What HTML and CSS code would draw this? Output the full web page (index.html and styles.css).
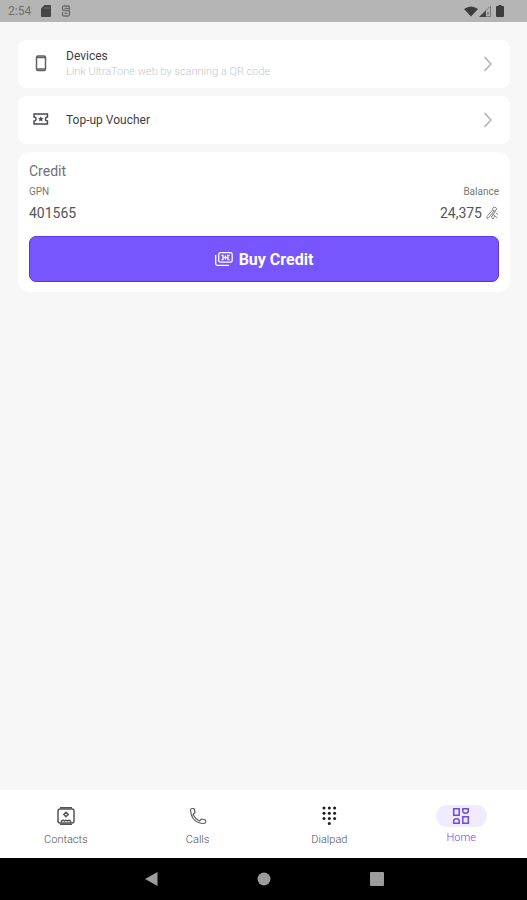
FILE: index.html
```html
<!DOCTYPE html>
<html lang="en">
<head>
<meta charset="utf-8">
<meta name="viewport" content="width=device-width, initial-scale=1">
<title>UltraTone</title>
<link rel="stylesheet" href="styles.css">
</head>
<body>
<header class="status">
  <div class="status-group">
    <span class="clock">2:54</span>
    <svg width="10" height="12" viewBox="0 0 10 12"><path d="M3.500 0H9a1 1 0 0 1 1 1v10a1 1 0 0 1-1 1H1a1 1 0 0 1-1-1V3.500z" fill="#454545"/><path d="M4 2v2M6 2v2M8 2v2" stroke="#777"/></svg>
    <svg width="10" height="12" viewBox="0 0 10 12" fill="none" stroke="#6c6c6c" stroke-width="1.300"><path d="M1.500 2.500Q1.500 1 3 1h4q1.500 0 1.500 1.500M1.500 2.500V4Q1.500 5.500 3 5.500h4q1.500 0 1.500 1.500v2.500Q8.500 11 7 11H3Q1.500 11 1.500 9.500V7M3.500 3.300h5V5M3.500 8.300h3"/></svg>
  </div>
  <div class="status-group status-right">
    <svg width="14" height="12" viewBox="0 0 14 12"><path d="M0 4Q7-1 14 4L7 11.500z" fill="#3c3c3c"/></svg>
    <svg width="12" height="12" viewBox="0 0 12 12"><path d="M11.500 1v10.500H1z" fill="none" stroke="#777"/><path d="M7 5.500V12H0z" fill="#444"/><path d="M9 7v3" stroke="#555"/></svg>
    <svg class="battery" width="8" height="12" viewBox="0 0 8 12"><path d="M2.500 0h3v1H7a1 1 0 0 1 1 1v9a1 1 0 0 1-1 1H1a1 1 0 0 1-1-1V2a1 1 0 0 1 1-1h1.500z" fill="#3c3c3c"/></svg>
  </div>
</header>

<main class="content">
  <a class="card row" href="#devices">
    <svg class="row-icon" width="18" height="18" viewBox="0 0 18 18" fill="none" stroke="#606068"><rect x="4.500" y="1" width="9" height="14.500" rx="1.500" stroke-width="1.500"/><path d="M4.500 2.500h9M4.500 14h9" stroke-width="1.500"/></svg>
    <span class="row-text"><span class="row-title">Devices</span><span class="row-note">Link UltraTone web by scanning a QR code</span></span>
    <svg width="8" height="16" viewBox="0 0 8 16" fill="none" stroke="#a8a8a8" stroke-width="1.300"><path d="M.5 1L7 8 .5 15"/></svg>
  </a>
  <a class="card row" href="#voucher">
    <svg class="row-icon" width="18" height="18" viewBox="0 0 18 18" fill="none" stroke="#48484c" stroke-width="1.400"><path d="M2 3h13.500v3a2 2 0 0 0 0 4v3H2v-3a2 2 0 0 0 0-4z"/><path d="M8.800 5.300l.8 1.700 1.900.2-1.400 1.300.4 1.900-1.700-.9-1.700.9.4-1.900-1.400-1.300L8 7z" fill="#48484c" stroke="none"/></svg>
    <span class="row-title">Top-up Voucher</span>
    <svg width="8" height="16" viewBox="0 0 8 16" fill="none" stroke="#a8a8a8" stroke-width="1.300"><path d="M.5 1L7 8 .5 15"/></svg>
  </a>
  <section class="card credit">
    <h2 class="credit-title">Credit</h2>
    <dl class="facts">
      <div><dt>GPN</dt><dd>401565</dd></div>
      <div class="balance"><dt>Balance</dt><dd>24,375
        <svg width="13" height="14" viewBox="0 0 13 14" fill="none" stroke="#858585"><ellipse cx="8.500" cy="3" rx="2" ry="1.800"/><path d="M6.500 4L1 10.500M8 5L2.500 12M1 10.500v2l1.500-.5M9.500 5L6 10.500M6 7.500l5.500 4.500M10 7l2 1.500M5 10l2 3 2-3"/></svg></dd></div>
    </dl>
    <button class="buy" type="button">
      <svg width="18" height="14" viewBox="0 0 18 14" fill="none" stroke="#fff" stroke-width="1.300"><rect x="3.700" y=".7" width="13.500" height="9.500" rx="2"/><path d="M.7 3v8.800a1.500 1.500 0 0 0 1.500 1.500H14M6.500 3.300h1.500v4.400H6.500M14.500 3.300H13v4.400h1.500M10.500 3.500v4M8.800 5.500h3.400"/></svg>
      Buy Credit
    </button>
  </section>
</main>

<nav class="tabs">
  <a class="tab" href="#contacts">
    <span class="tab-icon"><svg width="18" height="18" viewBox="0 0 18 18" fill="none" stroke="#555" stroke-width="1.500"><rect x="1" y="2" width="16" height="14" rx="2"/><path d="M3 .8h12M3 17.200h12"/><path d="M9 5.300L11.200 7.500 9 9.700 6.800 7.500zM4.500 15.500v-1.500q1.500-1.500 3 0 1.500-1.500 3 0 1.500-1.500 3 0v1.500"/></svg></span>
    Contacts
  </a>
  <a class="tab" href="#calls">
    <span class="tab-icon"><svg width="18" height="18" viewBox="0 0 18 18" fill="none" stroke="#606060" stroke-width="1.200" stroke-linejoin="round"><path d="M1.500 3Q1.500 1.500 3 1.500h2L6 5.500 4 7.500Q6.300 12 10.500 14l2-2 4 1v2q0 1.500-1.500 1.500Q2.500 16 1.500 3z"/></svg></span>
    Calls
  </a>
  <a class="tab" href="#dialpad">
    <span class="tab-icon"><svg width="16" height="20" viewBox="0 0 16 20" fill="#1c1c1c"><circle cx="3" cy="2" r="1.500"/><circle cx="8.300" cy="2" r="1.500"/><circle cx="13.600" cy="2" r="1.500"/><circle cx="3" cy="7.200" r="1.500"/><circle cx="8.300" cy="7.200" r="1.500"/><circle cx="13.600" cy="7.200" r="1.500"/><circle cx="3" cy="12.400" r="1.500"/><circle cx="8.300" cy="12.400" r="1.500"/><circle cx="13.600" cy="12.400" r="1.500"/><circle cx="8.300" cy="17.600" r="1.500"/></svg></span>
    Dialpad
  </a>
  <a class="tab tab-active" href="#home" aria-current="page">
    <span class="tab-icon"><svg width="18" height="18" viewBox="0 0 18 18" fill="none" stroke="#6b4be0" stroke-width="1.500"><path d="M1.700 1.700h5.500v6.500H1.700zM10.800 9.800h5.500v6.500h-5.500zM10.800 1.700h5.500V4q0 2.200-2.750 2.200T10.800 4zM1.700 16.300V14q0-2.200 2.750-2.200T7.200 14v2.300z"/></svg></span>
    Home
  </a>
</nav>

<footer class="system">
  <button type="button" aria-label="Back"><svg width="14" height="16" viewBox="0 0 14 16"><path d="M13.500 1v14L1 8z" fill="#9c9c9c"/></svg></button>
  <button type="button" aria-label="Home screen"><svg width="14" height="14" viewBox="0 0 14 14"><circle cx="7" cy="7" r="6.500" fill="#9c9c9c"/></svg></button>
  <button type="button" aria-label="Recent apps"><svg width="14" height="14" viewBox="0 0 14 14"><rect width="14" height="14" rx="1" fill="#9c9c9c"/></svg></button>
</footer>
</body>
</html>
```
FILE: styles.css
```css
* { box-sizing: border-box; }

body {
  margin: 0;
  min-height: 100vh;
  display: flex;
  flex-direction: column;
  background: #f7f7f7;
  font-family: Roboto, "Liberation Sans", sans-serif;
  color: #555;
}

svg { display: block; flex: none; }
a { color: inherit; text-decoration: none; }
button { border: 0; padding: 0; font: inherit; cursor: pointer; }

.status {
  display: flex;
  justify-content: space-between;
  height: 22px;
  padding: 0 23px 0 8px;
  background: #b5b5b5;
}
.status-group { display: flex; align-items: center; gap: 10px; }
.status-right { gap: 1px; }
.battery { margin-left: 4px; }
.clock { font-size: 12px; color: #707070; }

.content {
  flex: 1;
  display: flex;
  flex-direction: column;
  gap: 8px;
  padding: 18px 17px 18px 18px;
}
.card { background: #fff; border-radius: 8px; }

.row {
  display: flex;
  align-items: center;
  min-height: 48px;
  padding: 0 18px 0 14px;
}
.row-icon { margin-right: 16px; }
.row-text { flex: 1; display: flex; flex-direction: column; }
.row-title { flex: 1; font-size: 12px; line-height: 16px; color: #3e3e42; }
.row-note { font-size: 11px; font-weight: 300; line-height: 16px; color: #c4c9cd; }

.credit { padding: 10px 11px; border-radius: 12px; }
.credit-title {
  margin: 0;
  font-size: 14px;
  font-weight: 400;
  line-height: 18px;
  color: #707070;
}
.facts { display: flex; justify-content: space-between; margin: 4px 0 14px; }
.facts dt { font-size: 10px; line-height: 16px; color: #777; }
.facts dd {
  display: flex;
  align-items: center;
  gap: 4px;
  margin: 4px 0 0;
  font-size: 14px;
  line-height: 18px;
}
.balance dt { text-align: right; }

.buy {
  display: flex;
  align-items: center;
  justify-content: center;
  gap: 6px;
  width: 100%;
  height: 46px;
  border: 1px solid #5f35e0;
  border-radius: 7px;
  background: #7856ff;
  color: #fff;
  font-size: 16px;
  font-weight: 700;
}

.tabs {
  display: grid;
  grid-template-columns: repeat(4, 1fr);
  height: 68px;
  padding-top: 15px;
  background: #fff;
}
.tab {
  display: flex;
  flex-direction: column;
  align-items: center;
  gap: 6px;
  font-size: 11px;
  font-weight: 300;
  line-height: 14px;
  color: #505050;
}
.tab-icon {
  display: flex;
  align-items: center;
  justify-content: center;
  width: 51px;
  height: 22px;
  border-radius: 11px;
}
.tab-active { gap: 4px; color: #7040f0; }
.tab-active .tab-icon { background: #f0ebfe; }

.system {
  display: flex;
  align-items: center;
  justify-content: center;
  height: 42px;
  background: #000;
}
.system button {
  display: flex;
  justify-content: center;
  width: 113px;
  background: none;
}
```
